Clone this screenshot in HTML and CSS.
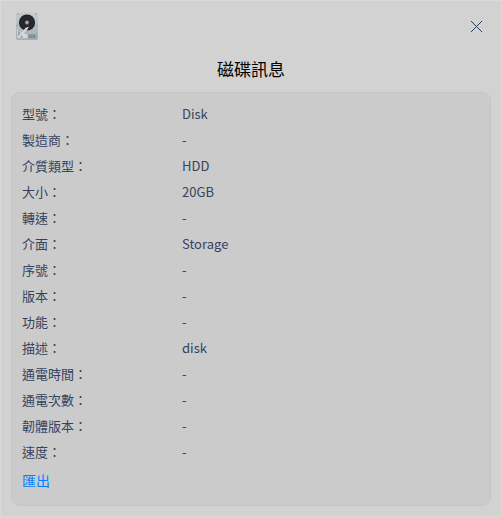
FILE: index.html
```html
<!DOCTYPE html>
<html lang="zh-Hant"><head><meta charset="utf-8"><title>磁碟訊息</title><link rel="stylesheet" href="styles.css"></head>
<body>
<main class="window">
<header class="bar">
<svg class="disk" width="24" height="29" viewBox="0 0 24 29"><defs><linearGradient id="metal" x2="0" y2="1"><stop offset="0" stop-color="#c8cacb"/><stop offset=".55" stop-color="#b5bdc1"/><stop offset="1" stop-color="#9faab0"/></linearGradient></defs><rect x="1" y="1" width="22" height="27" rx="2" fill="#aaaeb0"/><rect x="1" y=".5" width="22" height="26.5" rx="2" fill="url(#metal)"/><g fill="#7d8589"><circle cx="3" cy="2.2" r=".6"/><circle cx="21" cy="2.2" r=".6"/><circle cx="2" cy="13.5" r=".6"/><circle cx="22" cy="13.5" r=".6"/></g><circle cx="12" cy="10.5" r="8.1" fill="#25242a"/><circle cx="12" cy="10.5" r="5" fill="none" stroke="#333238" stroke-width=".7"/><circle cx="12" cy="10.5" r="2.2" fill="#77777a"/><circle cx="12" cy="10.5" r="1" fill="#d5d5d5"/><path d="M2 17l4.5 3.5 4-4.5 3.4-1.5-1.6 3.3-3.8 4 4 .4v4H2.5z" fill="#d5d9dc"/><path d="M3 17.8v6.5l3-2.8zM4 25.5l3-2.2 1.5 2.2" fill="#9ba5ab"/><rect x="13.5" y="22.5" width="7" height="3.5" fill="#7f8a91"/><path d="M15.5 23v2.5M17.5 23v2.5" stroke="#9da5a9" stroke-width=".5"/></svg>
<svg class="close" width="11" height="11" viewBox="0 0 11 11"><path d="M0 0l11 11M11 0L0 11"/></svg>
</header>
<h1 class="title">磁碟訊息</h1>
<section class="card">
<dl class="info">
<dt>型號：</dt><dd>Disk</dd><dt>製造商：</dt><dd>-</dd><dt>介質類型：</dt><dd>HDD</dd><dt>大小：</dt><dd>20GB</dd><dt>轉速：</dt><dd>-</dd><dt>介面：</dt><dd>Storage</dd><dt>序號：</dt><dd>-</dd><dt>版本：</dt><dd>-</dd><dt>功能：</dt><dd>-</dd><dt>描述：</dt><dd>disk</dd><dt>通電時間：</dt><dd>-</dd><dt>通電次數：</dt><dd>-</dd><dt>韌體版本：</dt><dd>-</dd><dt>速度：</dt><dd>-</dd>
</dl>
<a class="export">匯出</a>
</section>
</main>
</body></html>
```
FILE: styles.css
```css
* { box-sizing: border-box; margin: 0; }
body { font-family: "Noto Sans CJK SC", sans-serif; background: #d2d2d2; color: #36435f; }
.window { height: 517px; border: 1px solid #dadada; display: flex; flex-direction: column; padding: 0 10px 10px; }
.bar { height: 50px; display: flex; justify-content: space-between; align-items: center; padding: 1px 9px 0 4px; }
.close { fill: none; stroke: #2c3c60; stroke-width: 1; }
.title { height: 41px; line-height: 35px; text-align: center; font-size: 17px; font-weight: 400; color: #000; }
.card { flex: 1; border: 1px solid #c5c5c5; border-radius: 9px; background: #cbcbcb; padding: 8px 10px; }
.info { display: grid; grid-template-columns: 160px 1fr; grid-auto-rows: 26px; font-size: 13px; line-height: 26px; font-weight: 400; }
.export { display: block; color: #0081ff; font-size: 14px; line-height: 30px; font-weight: 400; }
```
